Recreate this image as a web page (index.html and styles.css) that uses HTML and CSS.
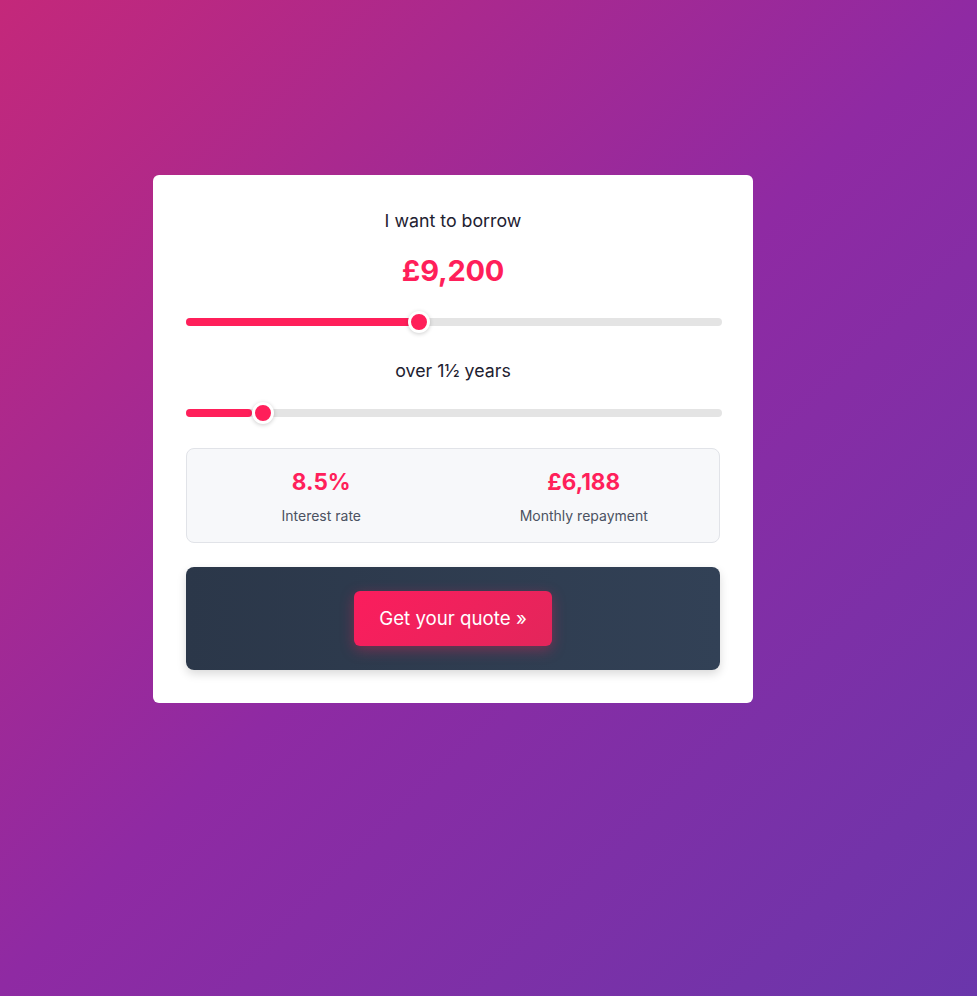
FILE: index.html
```html
<!DOCTYPE html>
<html lang="en">
<head>
<meta charset="utf-8">
<title>Loan calculator</title>
<link rel="stylesheet" href="styles.css">
</head>
<body>
<div class="page">
  <div class="card">
    <div class="label">I want to borrow</div>
    <div class="amount">£9,200</div>
    <div class="slider slider-amount">
      <div class="track"></div>
      <div class="fill" style="width: 43.2%"></div>
      <div class="thumb" style="left: calc(43.2% * 514 / 536 + 0px)"></div>
    </div>
    <div class="label label-term">over 1½ years</div>
    <div class="slider slider-term">
      <div class="track"></div>
      <div class="fill" style="width: 12.3%"></div>
      <div class="thumb" style="left: calc(12.8% * 514 / 536 + 0px)"></div>
    </div>
    <div class="stats">
      <div class="stat">
        <div class="stat-value">8.5%</div>
        <div class="stat-label">Interest rate</div>
      </div>
      <div class="stat">
        <div class="stat-value">£6,188</div>
        <div class="stat-label">Monthly repayment</div>
      </div>
    </div>
    <div class="cta">
      <button class="quote-btn">Get your quote »</button>
    </div>
  </div>
</div>
</body>
</html>
```

FILE: styles.css
```css
html, body {
  margin: 0;
  padding: 0;
}
body {
  min-height: 996px;
  background: linear-gradient(135deg, #c4287a 0%, #8f2aa3 50%, #6a36ab 100%);
  font-family: Inter, "Noto Sans", "Liberation Sans", sans-serif;
}
.page {
  padding: 175px 0 0 153px;
}
.card {
  width: 534px;
  padding: 33px;
  background: #ffffff;
  border-radius: 6px;
  text-align: center;
}
.label {
  font-size: 17.8px;
  line-height: 26px;
  color: #1e2130;
}
.amount {
  margin-top: 19px;
  font-size: 29px;
  line-height: 36px;
  font-weight: 700;
  color: #ff1f5a;
  letter-spacing: -0.2px;
}
.slider {
  position: relative;
  width: 536px;
  height: 22px;
}
.slider-amount {
  margin-top: 22px;
}
.label-term {
  margin-top: 25px;
}
.slider-term {
  margin-top: 18px;
}
.track {
  position: absolute;
  left: 0;
  right: 0;
  top: 7px;
  height: 8px;
  border-radius: 4px;
  background: #e4e4e4;
}
.fill {
  position: absolute;
  left: 0;
  top: 7px;
  height: 8px;
  border-radius: 4px;
  background: #ff1f5a;
}
.thumb {
  position: absolute;
  top: 0;
  width: 16px;
  height: 16px;
  border: 3px solid #ffffff;
  border-radius: 50%;
  background: #ff1f5a;
  box-shadow: 0 1px 4px rgba(0, 0, 0, 0.2);
}
.stats {
  margin-top: 24px;
  display: grid;
  grid-template-columns: 1fr 1fr;
  padding: 19px 4px 16px 3px;
  background: #f7f8fa;
  border: 1px solid #e1e3e8;
  border-radius: 8px;
}
.stat-value {
  font-size: 22.5px;
  line-height: 28px;
  font-weight: 700;
  color: #ff1f5a;
}
.stat-label {
  margin-top: 10px;
  font-size: 14px;
  line-height: 20px;
  color: #4b5261;
}
.cta {
  margin-top: 24px;
  padding: 24px 0;
  background: linear-gradient(90deg, #2b3749 0%, #324156 100%);
  border-radius: 8px;
  box-shadow: 0 4px 10px rgba(0, 0, 0, 0.15);
  display: flex;
  justify-content: center;
}
.quote-btn {
  height: 55px;
  padding: 0 25px;
  border: none;
  border-radius: 6px;
  background: linear-gradient(135deg, #fb1d5d 0%, #e3265b 100%);
  color: #ffffff;
  font-family: Inter, "Noto Sans", "Liberation Sans", sans-serif;
  font-size: 18.7px;
  box-shadow: 0 4px 14px rgba(255, 31, 90, 0.35);
}
```
